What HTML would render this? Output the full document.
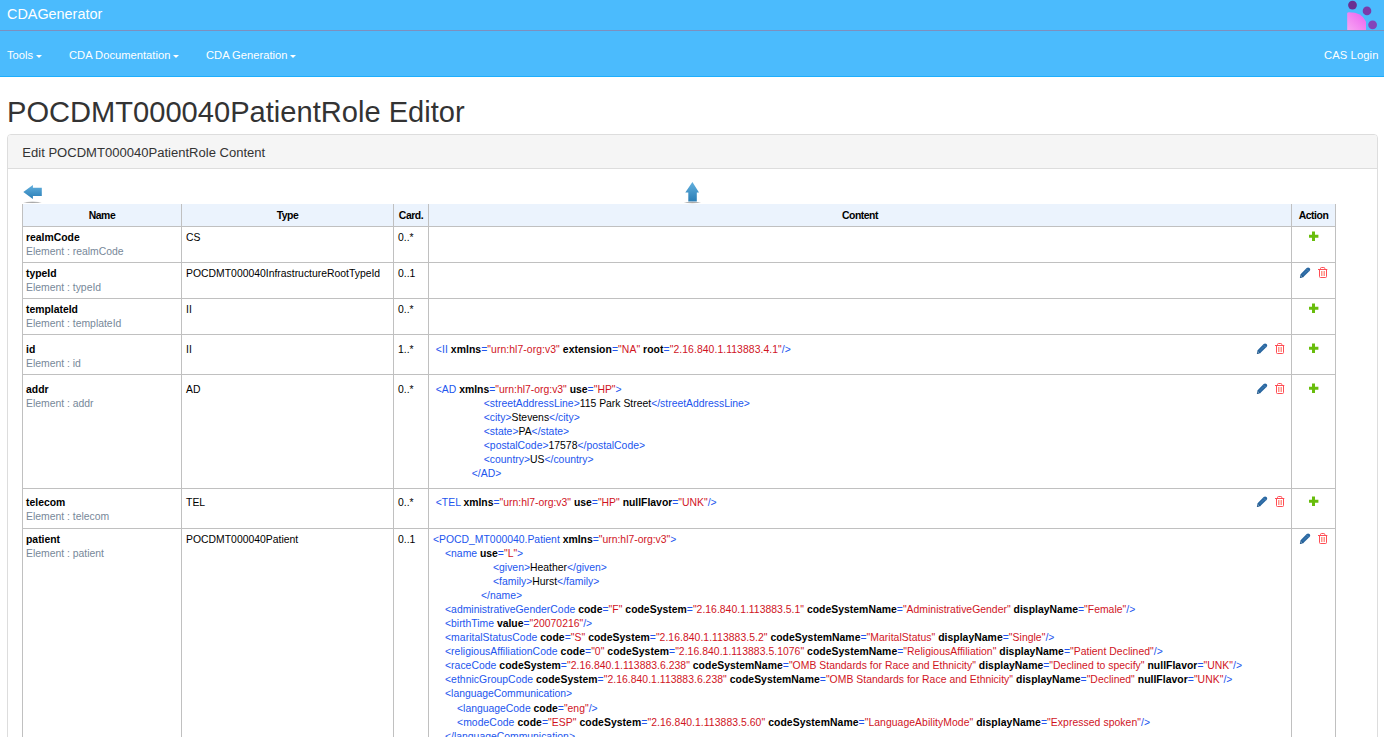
<!DOCTYPE html>
<html><head><meta charset="utf-8">
<style>
*{box-sizing:border-box}
html,body{margin:0;padding:0;background:#fff;width:1384px;height:737px;overflow:hidden;position:relative;font-family:"Liberation Sans",sans-serif;color:#333}
.a{position:absolute;white-space:nowrap}
#top{position:absolute;left:0;top:0;width:1384px;height:30px;background:#4bbbfd}
#line{position:absolute;left:0;top:30px;width:1384px;height:1px;background:#7d8fbf}
#nav{position:absolute;left:0;top:31px;width:1384px;height:45px;background:#4bbbfd;border-bottom:1px solid #1eaefc;height:46px}
.brand{font-size:14.4px;color:#fff;line-height:20px}
.nl{font-size:11.2px;color:#fff;line-height:16px}
.caret{display:inline-block;width:0;height:0;border-top:3.2px solid #fff;border-left:3.2px solid transparent;border-right:3.2px solid transparent;vertical-align:middle;margin-left:3px}
h1{margin:0;font-weight:normal;font-size:29.1px;line-height:32px;color:#333}
#panel{position:absolute;left:7px;top:134px;width:1371px;height:700px;border:1px solid #ddd;border-radius:4px}
#ph{position:absolute;left:0;top:0;width:1369px;height:34px;background:#f5f5f5;border-bottom:1px solid #ddd;border-radius:3px 3px 0 0}
.pt{font-size:13.05px;line-height:16px;color:#333}
.hl{position:absolute;background:#c0c0c0;height:1px}
.vl{position:absolute;background:#c0c0c0;width:1px}
.th{font-size:10.4px;font-weight:bold;line-height:14px;color:#000;text-align:center;letter-spacing:-0.45px}
.t{font-size:10.4px;line-height:14px;color:#000}
.b{font-weight:bold}
.m{color:#778899}
.x{font-size:10.4px;line-height:14px;color:#000}
.g{color:#2255ee}
.r{color:#d0141e}
.k{color:#000}
</style></head><body>
<div id="top"></div>
<div id="line"></div>
<div id="nav"></div>
<div class="a brand" style="left:7px;top:4px">CDAGenerator</div>
<svg class="a" style="left:1340px;top:0" width="44" height="30" viewBox="0 0 44 30">
<defs><linearGradient id="pg" x1="0" y1="1" x2="1" y2="0"><stop offset="0" stop-color="#f7a6f2"/><stop offset="1" stop-color="#ec5ff0"/></linearGradient></defs>
<path d="M7.2 30 L7.2 13.5 Q7.2 12.2 9 12.2 Q22 12.2 26 21.5 L26 30 Z" fill="url(#pg)"/>
<circle cx="12.5" cy="5.1" r="4.4" fill="#6a2e92"/>
<circle cx="27" cy="10.9" r="4.3" fill="#7a3aaa"/>
<circle cx="32.6" cy="24.8" r="4.4" fill="#8444ba"/>
</svg>
<div class="a nl" style="left:7px;top:47px">Tools<span class="caret"></span></div>
<div class="a nl" style="left:69px;top:47px">CDA Documentation<span class="caret"></span></div>
<div class="a nl" style="left:206px;top:47px">CDA Generation<span class="caret"></span></div>
<div class="a nl" style="left:1324px;top:47px;letter-spacing:0.12px">CAS Login</div>

<h1 class="a" style="left:7px;top:96px">POCDMT000040PatientRole Editor</h1>

<div id="panel"><div id="ph"></div></div>
<div class="a pt" style="left:22.3px;top:145px">Edit POCDMT000040PatientRole Content</div>

<!-- arrows -->
<svg class="a" style="left:20px;top:182px" width="26" height="24" viewBox="0 0 26 24">
<defs><linearGradient id="ag" x1="0" y1="0" x2="0" y2="1"><stop offset="0" stop-color="#62b0de"/><stop offset="1" stop-color="#2a7db5"/></linearGradient>
<radialGradient id="sg"><stop offset="0" stop-color="#8a8a8a" stop-opacity=".75"/><stop offset=".6" stop-color="#999" stop-opacity=".7"/><stop offset="1" stop-color="#bbb" stop-opacity="0"/></radialGradient></defs>
<path d="M3.3 10 L12.9 2.9 L12.9 5.8 L21.8 5.8 L21.8 13.9 L12.9 13.9 L12.9 17 Z" fill="url(#ag)"/>
<ellipse cx="12.5" cy="20.4" rx="9.5" ry="1.15" fill="url(#sg)"/>
</svg>
<svg class="a" style="left:680px;top:178px" width="26" height="26" viewBox="0 0 26 26">
<path d="M12.4 4.1 L19 14.5 L16.8 14.5 L16.8 23.6 L8.3 23.6 L8.3 14.5 L5.3 14.5 Z" fill="url(#ag)"/>
<ellipse cx="12.4" cy="24.5" rx="9" ry="1.2" fill="url(#sg)"/>
</svg>

<div class="a" style="left:22px;top:204px;width:1313px;height:22px;background:#ebf3fd"></div>
<div class="vl" style="left:22px;top:204px;height:533px"></div>
<div class="vl" style="left:181px;top:204px;height:533px"></div>
<div class="vl" style="left:393px;top:204px;height:533px"></div>
<div class="vl" style="left:428px;top:204px;height:533px"></div>
<div class="vl" style="left:1291px;top:204px;height:533px"></div>
<div class="vl" style="left:1335px;top:204px;height:533px"></div>
<div class="hl" style="left:22px;top:226px;width:1314px"></div>
<div class="hl" style="left:22px;top:262px;width:1314px"></div>
<div class="hl" style="left:22px;top:298px;width:1314px"></div>
<div class="hl" style="left:22px;top:334px;width:1314px"></div>
<div class="hl" style="left:22px;top:374px;width:1314px"></div>
<div class="hl" style="left:22px;top:488px;width:1314px"></div>
<div class="hl" style="left:22px;top:528px;width:1314px"></div>
<div class="a th" style="left:23px;width:158px;top:209px">Name</div>
<div class="a th" style="left:182px;width:211px;top:209px">Type</div>
<div class="a th" style="left:394px;width:34px;top:209px">Card.</div>
<div class="a th" style="left:429px;width:862px;top:209px">Content</div>
<div class="a th" style="left:1292px;width:43px;top:209px">Action</div>
<div class="a t" style="left:26px;top:231px"><b>realmCode</b><br><span class="m">Element : realmCode</span></div>
<div class="a t" style="left:186.1px;top:231px">CS</div>
<div class="a t" style="left:398.0px;top:231px">0..*</div>
<div class="a t" style="left:26px;top:267px"><b>typeId</b><br><span class="m">Element : typeId</span></div>
<div class="a t" style="left:186.1px;top:267px">POCDMT000040InfrastructureRootTypeId</div>
<div class="a t" style="left:398.0px;top:267px">0..1</div>
<div class="a t" style="left:26px;top:303px"><b>templateId</b><br><span class="m">Element : templateId</span></div>
<div class="a t" style="left:186.1px;top:303px">II</div>
<div class="a t" style="left:398.0px;top:303px">0..*</div>
<div class="a t" style="left:26px;top:343px"><b>id</b><br><span class="m">Element : id</span></div>
<div class="a t" style="left:186.1px;top:343px">II</div>
<div class="a t" style="left:398.0px;top:343px">1..*</div>
<div class="a t" style="left:26px;top:383px"><b>addr</b><br><span class="m">Element : addr</span></div>
<div class="a t" style="left:186.1px;top:383px">AD</div>
<div class="a t" style="left:398.0px;top:383px">0..*</div>
<div class="a t" style="left:26px;top:496px"><b>telecom</b><br><span class="m">Element : telecom</span></div>
<div class="a t" style="left:186.1px;top:496px">TEL</div>
<div class="a t" style="left:398.0px;top:496px">0..*</div>
<div class="a t" style="left:26px;top:533px"><b>patient</b><br><span class="m">Element : patient</span></div>
<div class="a t" style="left:186.1px;top:533px">POCDMT000040Patient</div>
<div class="a t" style="left:398.0px;top:533px">0..1</div>
<svg class="a" style="left:1309px;top:231px" width="10" height="10" viewBox="0 0 10 10"><path d="M3 0.4h3v3.4h3.4v3h-3.4v3.4h-3v-3.4h-3.4v-3h3.4z" fill="#68bd0c"/></svg>
<svg class="a" style="left:1299px;top:267px" width="13" height="12" viewBox="-1 0 13 12"><path d="M2.7 7.9 L8.1 2.5" stroke="#2866a0" stroke-width="4" stroke-linecap="round"/><path d="M-0.2 11 L0.9 6.9 L4.0 10.0 Z" fill="#1f5a90"/><path d="M0.1 10.7 L0.6 9 L1.8 10.2 Z" fill="#1d4f80"/><path d="M6.7 2.2 L8.9 4.4" stroke="#7fb0dc" stroke-width="0.5"/><path d="M3.2 7.4 L6.6 4.0" stroke="#6da3d2" stroke-width="0.8" stroke-dasharray="0.9 0.9"/><path d="M0.6 9.4 L1.4 8.5 L1.9 9.4 Z" fill="#e6f4fb"/></svg>
<svg class="a" style="left:1318px;top:267px" width="11" height="12" viewBox="0 0 11 12"><g fill="none" stroke="#ff4d55" stroke-width="1"><path d="M0 2.5 H9.3"/><path d="M2.5 2.2 V1.5 Q2.5 0.5 3.5 0.5 H5.8 Q6.8 0.5 6.8 1.5 V2.2"/><path d="M1.5 2.6 V9.6 Q1.5 10.5 2.4 10.5 H7.6 Q8.5 10.5 8.5 9.6 V2.6"/></g><g stroke="#ff7060" stroke-width="0.75"><path d="M3.5 4 V9 M5 4 V9 M6.5 4 V9"/></g></svg>
<svg class="a" style="left:1309px;top:303px" width="10" height="10" viewBox="0 0 10 10"><path d="M3 0.4h3v3.4h3.4v3h-3.4v3.4h-3v-3.4h-3.4v-3h3.4z" fill="#68bd0c"/></svg>
<svg class="a" style="left:1309px;top:343px" width="10" height="10" viewBox="0 0 10 10"><path d="M3 0.4h3v3.4h3.4v3h-3.4v3.4h-3v-3.4h-3.4v-3h3.4z" fill="#68bd0c"/></svg>
<svg class="a" style="left:1256px;top:343px" width="13" height="12" viewBox="-1 0 13 12"><path d="M2.7 7.9 L8.1 2.5" stroke="#2866a0" stroke-width="4" stroke-linecap="round"/><path d="M-0.2 11 L0.9 6.9 L4.0 10.0 Z" fill="#1f5a90"/><path d="M0.1 10.7 L0.6 9 L1.8 10.2 Z" fill="#1d4f80"/><path d="M6.7 2.2 L8.9 4.4" stroke="#7fb0dc" stroke-width="0.5"/><path d="M3.2 7.4 L6.6 4.0" stroke="#6da3d2" stroke-width="0.8" stroke-dasharray="0.9 0.9"/><path d="M0.6 9.4 L1.4 8.5 L1.9 9.4 Z" fill="#e6f4fb"/></svg>
<svg class="a" style="left:1275px;top:343px" width="11" height="12" viewBox="0 0 11 12"><g fill="none" stroke="#ff4d55" stroke-width="1"><path d="M0 2.5 H9.3"/><path d="M2.5 2.2 V1.5 Q2.5 0.5 3.5 0.5 H5.8 Q6.8 0.5 6.8 1.5 V2.2"/><path d="M1.5 2.6 V9.6 Q1.5 10.5 2.4 10.5 H7.6 Q8.5 10.5 8.5 9.6 V2.6"/></g><g stroke="#ff7060" stroke-width="0.75"><path d="M3.5 4 V9 M5 4 V9 M6.5 4 V9"/></g></svg>
<svg class="a" style="left:1309px;top:383px" width="10" height="10" viewBox="0 0 10 10"><path d="M3 0.4h3v3.4h3.4v3h-3.4v3.4h-3v-3.4h-3.4v-3h3.4z" fill="#68bd0c"/></svg>
<svg class="a" style="left:1256px;top:383px" width="13" height="12" viewBox="-1 0 13 12"><path d="M2.7 7.9 L8.1 2.5" stroke="#2866a0" stroke-width="4" stroke-linecap="round"/><path d="M-0.2 11 L0.9 6.9 L4.0 10.0 Z" fill="#1f5a90"/><path d="M0.1 10.7 L0.6 9 L1.8 10.2 Z" fill="#1d4f80"/><path d="M6.7 2.2 L8.9 4.4" stroke="#7fb0dc" stroke-width="0.5"/><path d="M3.2 7.4 L6.6 4.0" stroke="#6da3d2" stroke-width="0.8" stroke-dasharray="0.9 0.9"/><path d="M0.6 9.4 L1.4 8.5 L1.9 9.4 Z" fill="#e6f4fb"/></svg>
<svg class="a" style="left:1275px;top:383px" width="11" height="12" viewBox="0 0 11 12"><g fill="none" stroke="#ff4d55" stroke-width="1"><path d="M0 2.5 H9.3"/><path d="M2.5 2.2 V1.5 Q2.5 0.5 3.5 0.5 H5.8 Q6.8 0.5 6.8 1.5 V2.2"/><path d="M1.5 2.6 V9.6 Q1.5 10.5 2.4 10.5 H7.6 Q8.5 10.5 8.5 9.6 V2.6"/></g><g stroke="#ff7060" stroke-width="0.75"><path d="M3.5 4 V9 M5 4 V9 M6.5 4 V9"/></g></svg>
<svg class="a" style="left:1309px;top:496px" width="10" height="10" viewBox="0 0 10 10"><path d="M3 0.4h3v3.4h3.4v3h-3.4v3.4h-3v-3.4h-3.4v-3h3.4z" fill="#68bd0c"/></svg>
<svg class="a" style="left:1256px;top:496px" width="13" height="12" viewBox="-1 0 13 12"><path d="M2.7 7.9 L8.1 2.5" stroke="#2866a0" stroke-width="4" stroke-linecap="round"/><path d="M-0.2 11 L0.9 6.9 L4.0 10.0 Z" fill="#1f5a90"/><path d="M0.1 10.7 L0.6 9 L1.8 10.2 Z" fill="#1d4f80"/><path d="M6.7 2.2 L8.9 4.4" stroke="#7fb0dc" stroke-width="0.5"/><path d="M3.2 7.4 L6.6 4.0" stroke="#6da3d2" stroke-width="0.8" stroke-dasharray="0.9 0.9"/><path d="M0.6 9.4 L1.4 8.5 L1.9 9.4 Z" fill="#e6f4fb"/></svg>
<svg class="a" style="left:1275px;top:496px" width="11" height="12" viewBox="0 0 11 12"><g fill="none" stroke="#ff4d55" stroke-width="1"><path d="M0 2.5 H9.3"/><path d="M2.5 2.2 V1.5 Q2.5 0.5 3.5 0.5 H5.8 Q6.8 0.5 6.8 1.5 V2.2"/><path d="M1.5 2.6 V9.6 Q1.5 10.5 2.4 10.5 H7.6 Q8.5 10.5 8.5 9.6 V2.6"/></g><g stroke="#ff7060" stroke-width="0.75"><path d="M3.5 4 V9 M5 4 V9 M6.5 4 V9"/></g></svg>
<svg class="a" style="left:1299px;top:533px" width="13" height="12" viewBox="-1 0 13 12"><path d="M2.7 7.9 L8.1 2.5" stroke="#2866a0" stroke-width="4" stroke-linecap="round"/><path d="M-0.2 11 L0.9 6.9 L4.0 10.0 Z" fill="#1f5a90"/><path d="M0.1 10.7 L0.6 9 L1.8 10.2 Z" fill="#1d4f80"/><path d="M6.7 2.2 L8.9 4.4" stroke="#7fb0dc" stroke-width="0.5"/><path d="M3.2 7.4 L6.6 4.0" stroke="#6da3d2" stroke-width="0.8" stroke-dasharray="0.9 0.9"/><path d="M0.6 9.4 L1.4 8.5 L1.9 9.4 Z" fill="#e6f4fb"/></svg>
<svg class="a" style="left:1318px;top:533px" width="11" height="12" viewBox="0 0 11 12"><g fill="none" stroke="#ff4d55" stroke-width="1"><path d="M0 2.5 H9.3"/><path d="M2.5 2.2 V1.5 Q2.5 0.5 3.5 0.5 H5.8 Q6.8 0.5 6.8 1.5 V2.2"/><path d="M1.5 2.6 V9.6 Q1.5 10.5 2.4 10.5 H7.6 Q8.5 10.5 8.5 9.6 V2.6"/></g><g stroke="#ff7060" stroke-width="0.75"><path d="M3.5 4 V9 M5 4 V9 M6.5 4 V9"/></g></svg>
<div class="a x" style="left:435.8px;top:343px;letter-spacing:0.066px"><span class="g">&lt;II</span> <span class="b">xmlns</span><span class="g">=</span><span class="r">"urn:hl7-org:v3"</span> <span class="b">extension</span><span class="g">=</span><span class="r">"NA"</span> <span class="b">root</span><span class="g">=</span><span class="r">"2.16.840.1.113883.4.1"</span><span class="g">/&gt;</span></div>
<div class="a x" style="left:435.8px;top:383px"><span class="g">&lt;AD</span> <span class="b">xmlns</span><span class="g">=</span><span class="r">"urn:hl7-org:v3"</span> <span class="b">use</span><span class="g">=</span><span class="r">"HP"</span><span class="g">&gt;</span></div>
<div class="a x" style="left:483.8px;top:397px"><span class="g">&lt;streetAddressLine</span><span class="g">&gt;</span><span class="k">115 Park Street</span><span class="g">&lt;/streetAddressLine</span><span class="g">&gt;</span></div>
<div class="a x" style="left:483.8px;top:411px"><span class="g">&lt;city</span><span class="g">&gt;</span><span class="k">Stevens</span><span class="g">&lt;/city</span><span class="g">&gt;</span></div>
<div class="a x" style="left:483.8px;top:425px"><span class="g">&lt;state</span><span class="g">&gt;</span><span class="k">PA</span><span class="g">&lt;/state</span><span class="g">&gt;</span></div>
<div class="a x" style="left:483.8px;top:439px"><span class="g">&lt;postalCode</span><span class="g">&gt;</span><span class="k">17578</span><span class="g">&lt;/postalCode</span><span class="g">&gt;</span></div>
<div class="a x" style="left:483.8px;top:453px"><span class="g">&lt;country</span><span class="g">&gt;</span><span class="k">US</span><span class="g">&lt;/country</span><span class="g">&gt;</span></div>
<div class="a x" style="left:471.8px;top:467px"><span class="g">&lt;/AD</span><span class="g">&gt;</span></div>
<div class="a x" style="left:435.8px;top:496px"><span class="g">&lt;TEL</span> <span class="b">xmlns</span><span class="g">=</span><span class="r">"urn:hl7-org:v3"</span> <span class="b">use</span><span class="g">=</span><span class="r">"HP"</span> <span class="b">nullFlavor</span><span class="g">=</span><span class="r">"UNK"</span><span class="g">/&gt;</span></div>
<div class="a x" style="left:433px;top:533px"><span class="g">&lt;POCD_MT000040.Patient</span> <span class="b">xmlns</span><span class="g">=</span><span class="r">"urn:hl7-org:v3"</span><span class="g">&gt;</span></div>
<div class="a x" style="left:445px;top:547px"><span class="g">&lt;name</span> <span class="b">use</span><span class="g">=</span><span class="r">"L"</span><span class="g">&gt;</span></div>
<div class="a x" style="left:493px;top:561px"><span class="g">&lt;given</span><span class="g">&gt;</span><span class="k">Heather</span><span class="g">&lt;/given</span><span class="g">&gt;</span></div>
<div class="a x" style="left:493px;top:575px"><span class="g">&lt;family</span><span class="g">&gt;</span><span class="k">Hurst</span><span class="g">&lt;/family</span><span class="g">&gt;</span></div>
<div class="a x" style="left:481px;top:589px"><span class="g">&lt;/name</span><span class="g">&gt;</span></div>
<div class="a x" style="left:445px;top:603px;letter-spacing:0.023px"><span class="g">&lt;administrativeGenderCode</span> <span class="b">code</span><span class="g">=</span><span class="r">"F"</span> <span class="b">codeSystem</span><span class="g">=</span><span class="r">"2.16.840.1.113883.5.1"</span> <span class="b">codeSystemName</span><span class="g">=</span><span class="r">"AdministrativeGender"</span> <span class="b">displayName</span><span class="g">=</span><span class="r">"Female"</span><span class="g">/&gt;</span></div>
<div class="a x" style="left:445px;top:617px"><span class="g">&lt;birthTime</span> <span class="b">value</span><span class="g">=</span><span class="r">"20070216"</span><span class="g">/&gt;</span></div>
<div class="a x" style="left:445px;top:631px;letter-spacing:0.041px"><span class="g">&lt;maritalStatusCode</span> <span class="b">code</span><span class="g">=</span><span class="r">"S"</span> <span class="b">codeSystem</span><span class="g">=</span><span class="r">"2.16.840.1.113883.5.2"</span> <span class="b">codeSystemName</span><span class="g">=</span><span class="r">"MaritalStatus"</span> <span class="b">displayName</span><span class="g">=</span><span class="r">"Single"</span><span class="g">/&gt;</span></div>
<div class="a x" style="left:445px;top:645px;letter-spacing:0.042px"><span class="g">&lt;religiousAffiliationCode</span> <span class="b">code</span><span class="g">=</span><span class="r">"0"</span> <span class="b">codeSystem</span><span class="g">=</span><span class="r">"2.16.840.1.113883.5.1076"</span> <span class="b">codeSystemName</span><span class="g">=</span><span class="r">"ReligiousAffiliation"</span> <span class="b">displayName</span><span class="g">=</span><span class="r">"Patient Declined"</span><span class="g">/&gt;</span></div>
<div class="a x" style="left:445px;top:659px;letter-spacing:0.03px"><span class="g">&lt;raceCode</span> <span class="b">codeSystem</span><span class="g">=</span><span class="r">"2.16.840.1.113883.6.238"</span> <span class="b">codeSystemName</span><span class="g">=</span><span class="r">"OMB Standards for Race and Ethnicity"</span> <span class="b">displayName</span><span class="g">=</span><span class="r">"Declined to specify"</span> <span class="b">nullFlavor</span><span class="g">=</span><span class="r">"UNK"</span><span class="g">/&gt;</span></div>
<div class="a x" style="left:445px;top:673px;letter-spacing:0.036px"><span class="g">&lt;ethnicGroupCode</span> <span class="b">codeSystem</span><span class="g">=</span><span class="r">"2.16.840.1.113883.6.238"</span> <span class="b">codeSystemName</span><span class="g">=</span><span class="r">"OMB Standards for Race and Ethnicity"</span> <span class="b">displayName</span><span class="g">=</span><span class="r">"Declined"</span> <span class="b">nullFlavor</span><span class="g">=</span><span class="r">"UNK"</span><span class="g">/&gt;</span></div>
<div class="a x" style="left:445px;top:687px"><span class="g">&lt;languageCommunication</span><span class="g">&gt;</span></div>
<div class="a x" style="left:457px;top:702px"><span class="g">&lt;languageCode</span> <span class="b">code</span><span class="g">=</span><span class="r">"eng"</span><span class="g">/&gt;</span></div>
<div class="a x" style="left:457px;top:716px;letter-spacing:0.059px"><span class="g">&lt;modeCode</span> <span class="b">code</span><span class="g">=</span><span class="r">"ESP"</span> <span class="b">codeSystem</span><span class="g">=</span><span class="r">"2.16.840.1.113883.5.60"</span> <span class="b">codeSystemName</span><span class="g">=</span><span class="r">"LanguageAbilityMode"</span> <span class="b">displayName</span><span class="g">=</span><span class="r">"Expressed spoken"</span><span class="g">/&gt;</span></div>
<div class="a x" style="left:445px;top:730px"><span class="g">&lt;/languageCommunication</span><span class="g">&gt;</span></div>
</body></html>
